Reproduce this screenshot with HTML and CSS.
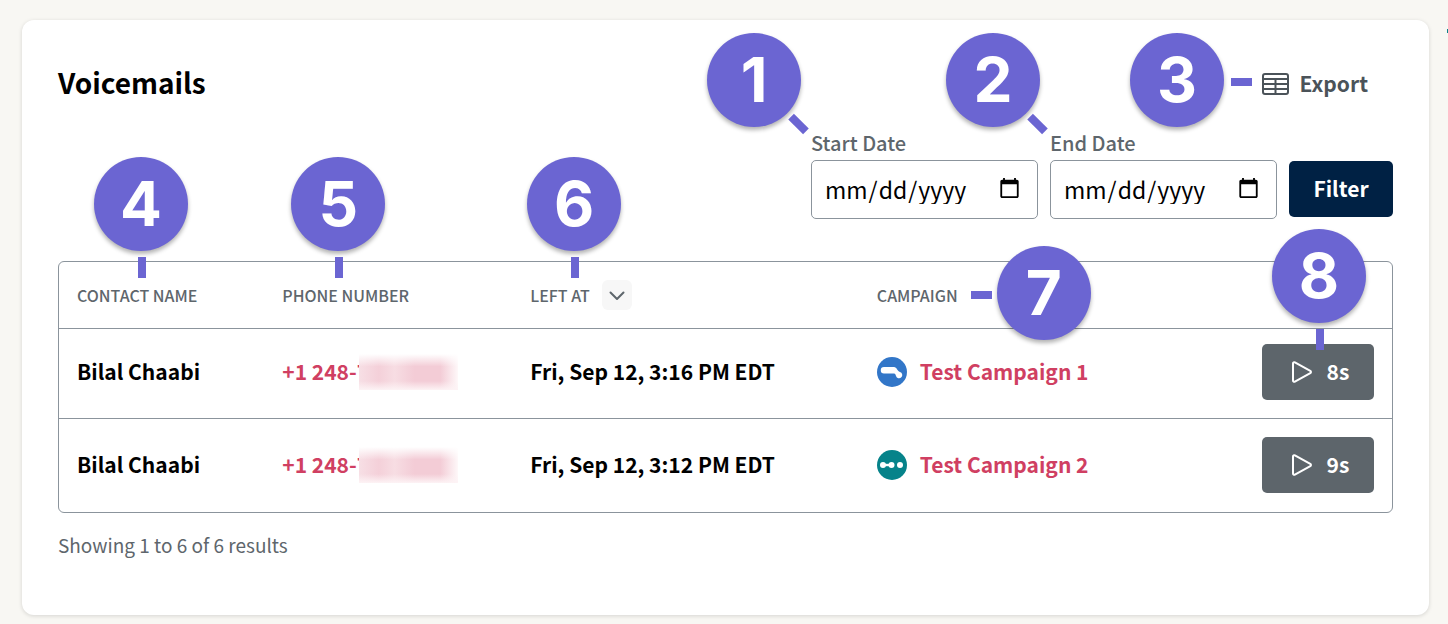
FILE: index.html
```html
<!DOCTYPE html>
<html lang="en">
<head>
<meta charset="utf-8">
<meta name="viewport" content="width=device-width, initial-scale=1">
<title>Voicemails</title>
<link rel="stylesheet" href="styles.css">
</head>
<body>
<span class="edge-mark"></span>
<main class="card">
  <header class="card-header">
    <h1 class="title">Voicemails</h1>
    <div class="export-wrap">
      <span class="callout callout-export">3</span>
      <button type="button" class="export">
        <svg class="export-icon" viewBox="0 0 28 24" fill="none" stroke="currentColor" stroke-width="2"><rect x="1" y="2" width="25" height="20" rx="2"/><path d="M1 7h25M1 12h25M1 17h25M13.500 7v15"/></svg>
        <span class="button-text">Export</span>
      </button>
    </div>
  </header>

  <form class="filters">
    <div class="field">
      <span class="callout callout-start">1</span>
      <label class="field-label" for="start">Start Date</label>
      <input class="date" type="date" id="start">
    </div>
    <div class="field">
      <span class="callout callout-start">2</span>
      <label class="field-label" for="end">End Date</label>
      <input class="date" type="date" id="end">
    </div>
    <button type="button" class="filter"><span class="button-text">Filter</span></button>
  </form>

  <table class="grid">
    <thead>
      <tr>
        <th class="col-name" scope="col"><span class="callout callout-down callout-name">4</span>CONTACT NAME</th>
        <th class="col-phone" scope="col"><span class="callout callout-down callout-phone">5</span>PHONE NUMBER</th>
        <th class="col-left" scope="col"><span class="callout callout-down callout-left-at">6</span><span class="sort-wrap">LEFT AT
          <button type="button" class="sort" aria-label="Sort by left at"><svg class="sort-icon" viewBox="0 0 16 16" fill="none" stroke="currentColor" stroke-width="2" stroke-linecap="round" stroke-linejoin="round"><path d="M1.500 5.500 8 12l6.500-6.500"/></svg></button></span></th>
        <th class="col-campaign" scope="col"><span class="callout callout-campaign">7</span>CAMPAIGN</th>
        <th class="col-play" scope="col"><span class="callout callout-down callout-play">8</span></th>
      </tr>
    </thead>
    <tbody>
      <tr>
        <td><span class="cell-text">Bilal Chaabi</span></td>
        <td><a class="link phone" href="#"><span class="cell-text">+1 248-7</span><span class="redacted"></span></a></td>
        <td><span class="cell-text">Fri, Sep 12, 3:16 PM EDT</span></td>
        <td><a class="link campaign" href="#"><svg class="campaign-icon" viewBox="0 0 30 30"><circle cx="15" cy="15" r="15" fill="#3276c8"/><path d="M7 10h10c3 0 3 4 6 5a3.200 3.200 0 1 1-4 4c-.5-2-1-2.500-3-2.500H7A3.200 3.200 0 0 1 7 10z" fill="#fff"/></svg><span class="cell-text">Test Campaign 1</span></a></td>
        <td class="cell-play"><button type="button" class="play"><svg class="play-icon" viewBox="0 0 22 22" fill="none" stroke="currentColor" stroke-width="2" stroke-linejoin="round"><path d="M2 2.500c0-1 1-1.600 1.900-1.100l15.400 8.500c.9.500.9 1.700 0 2.200L3.900 20.600C3 21.100 2 20.500 2 19.500z"/></svg><span class="button-text">8s</span></button></td>
      </tr>
      <tr>
        <td><span class="cell-text">Bilal Chaabi</span></td>
        <td><a class="link phone" href="#"><span class="cell-text">+1 248-7</span><span class="redacted"></span></a></td>
        <td><span class="cell-text">Fri, Sep 12, 3:12 PM EDT</span></td>
        <td><a class="link campaign" href="#"><svg class="campaign-icon" viewBox="0 0 30 30"><circle cx="15" cy="15" r="15" fill="#06838a"/><g fill="#fff"><circle cx="6" cy="15" r="3"/><circle cx="14.500" cy="15" r="3"/><circle cx="23" cy="15" r="3"/><path d="M6 13.800h8v2.400H6z"/></g></svg><span class="cell-text">Test Campaign 2</span></a></td>
        <td class="cell-play"><button type="button" class="play"><svg class="play-icon" viewBox="0 0 22 22" fill="none" stroke="currentColor" stroke-width="2" stroke-linejoin="round"><path d="M2 2.500c0-1 1-1.600 1.900-1.100l15.400 8.500c.9.500.9 1.700 0 2.200L3.900 20.600C3 21.100 2 20.500 2 19.500z"/></svg><span class="button-text">9s</span></button></td>
      </tr>
    </tbody>
  </table>
  <p class="summary">Showing 1 to 6 of 6 results</p>
</main>
</body>
</html>
```
FILE: styles.css
```css
* { box-sizing: border-box; }

body {
  margin: 0;
  padding: 20px 19px 10px 22px;
  background: #f8f7f3;
  color: #000;
  font: 700 21px/28px "Noto Sans CJK SC", "Noto Sans", sans-serif;
}

button, input { font: inherit; }
svg { display: block; flex: none; }

.edge-mark {
  position: absolute;
  top: 29px;
  right: 0;
  width: 1px;
  height: 4px;
  background: #06838a;
}

.card {
  padding: 42px 36px 56px;
  background: #fff;
  border-radius: 12px;
  box-shadow: 0 1px 4px rgba(0, 0, 0, 0.14);
}

.card-header {
  display: flex;
  justify-content: space-between;
  align-items: center;
}

.title {
  margin: 0;
  font-size: 28px;
  font-weight: 700;
  line-height: 40px;
}

.export-wrap { position: relative; padding: 4px 25px 0 0; }

.export {
  display: flex;
  align-items: center;
  gap: 10px;
  padding: 0;
  border: 0;
  background: none;
  color: #4b5359;
}

.export-icon { width: 28px; height: 24px; }

.button-text, .cell-text { display: block; padding-bottom: 2px; }

.filters {
  display: flex;
  justify-content: flex-end;
  align-items: flex-end;
  gap: 12px;
  margin-top: 27px;
}

.field {
  position: relative;
  display: flex;
  flex-direction: column;
  gap: 3px;
  width: 227px;
}

.field-label { color: #5e666c; font-size: 20px; font-weight: 500; }

.date {
  width: 100%;
  height: 59px;
  padding: 0 14px 2px 12px;
  border: 1px solid #8b949c;
  border-radius: 5px;
  background: #fff;
  color: #000;
  font-size: 23px;
  font-weight: 400;
}

.filter {
  width: 104px;
  height: 56px;
  margin-bottom: 2px;
  border: 0;
  border-radius: 5px;
  background: #002144;
  color: #fff;
}

.grid {
  width: 100%;
  margin-top: 42px;
  border: 1px solid #8b949c;
  border-radius: 6px;
  border-spacing: 0;
  table-layout: fixed;
}

.grid th {
  position: relative;
  height: 66px;
  padding: 0 18px;
  color: #5e666c;
  font-size: 16px;
  font-weight: 500;
  text-align: left;
}

.grid td {
  padding: 18px 18px 19px;
  border-top: 1px solid #8b949c;
  white-space: nowrap;
}

.grid tbody tr:first-child td { padding: 15px 18px 18px; }

.col-name { width: 15.4%; }
.col-phone { width: 18.6%; }
.col-left { width: 26%; }
.col-campaign { width: 28%; }

.sort-wrap { display: flex; align-items: center; gap: 12px; }

.sort {
  display: grid;
  place-items: center;
  width: 30px;
  height: 30px;
  padding: 0;
  border: 0;
  border-radius: 6px;
  background: #f7f7f7;
  color: #5e666c;
}

.sort-icon { width: 16px; height: 16px; }

.link { color: #d03f62; text-decoration: none; }
.phone { display: flex; align-items: center; }

.redacted {
  width: 99px;
  height: 36px;
  margin-left: -10px;
  background:
    linear-gradient(#fff, transparent 35%, transparent 75%, #fdf3f5),
    linear-gradient(90deg, #f7dfe5, #f4d0d9 20%, #f7dde3 36%, #f3ccd6 56%, #f3ccd6 82%, #fef8f9);
}

.campaign { display: flex; align-items: center; gap: 13px; }
.campaign-icon { width: 30px; height: 30px; }

.grid .cell-play { text-align: right; }

.play {
  display: inline-flex;
  justify-content: center;
  align-items: center;
  gap: 14px;
  width: 112px;
  height: 56px;
  padding: 0 0 0 4px;
  border: 0;
  border-radius: 5px;
  background: #5d656b;
  color: #fff;
  vertical-align: top;
}

.play-icon { width: 22px; height: 22px; }

.summary {
  margin: 18px 0 0;
  color: #5e666c;
  font-size: 19px;
  font-weight: 400;
}

/* Numbered callouts drawn over the interface */
.callout {
  position: absolute;
  z-index: 1;
  width: 94px;
  height: 94px;
  border-radius: 50%;
  background: #6b65d2;
  box-shadow: 0 3px 4px rgba(0, 0, 0, 0.3);
  color: #fff;
  font: 700 62px/94px Inter, sans-serif;
  text-align: center;
}

.callout::after {
  content: "";
  position: absolute;
  width: 21px;
  height: 8px;
  background: #6b65d2;
}

.callout-start { left: -104px; top: -96px; }
.callout-start::after { left: 81px; top: 87px; transform: rotate(45deg); }

.callout-export { right: 169px; top: -32px; }
.callout-export::after { left: 101px; top: 45px; }

.callout-down::after { left: 44px; top: 100px; width: 8px; height: 21px; }
.callout-name { left: 35px; top: -105px; }
.callout-phone { left: 27px; top: -105px; }
.callout-left-at { left: 15px; top: -105px; }
.callout-play { right: 26px; top: -33px; }

.callout-campaign { left: 138px; top: -16px; }
.callout-campaign::after { left: -26px; top: 45px; }
```
